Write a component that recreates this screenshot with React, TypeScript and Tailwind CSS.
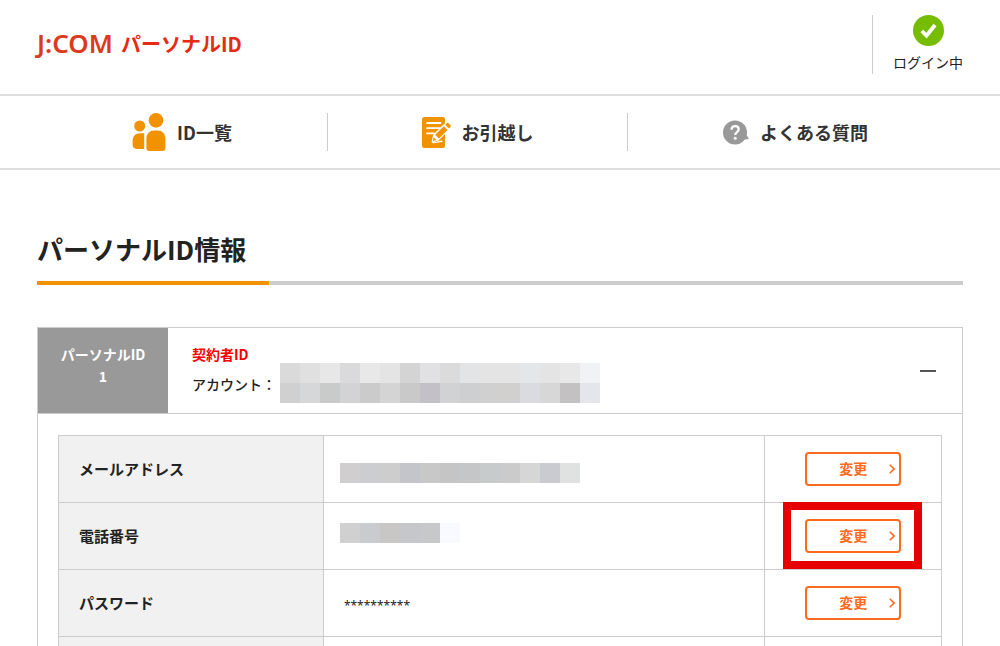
import type { ReactNode } from 'react';

const accountMask = [
  ['bg-[#dadada]', 'bg-[#e0e0e0]', 'bg-[#e6e7e6]', 'bg-[#dadadd]', 'bg-[#e8e8e8]', 'bg-[#e4e4e4]', 'bg-[#d4d4d4]', 'bg-[#e1e1e4]', 'bg-[#dadbda]', 'bg-[#e2e4e6]', 'bg-[#e4e4e4]', 'bg-[#e3e4e3]', 'bg-[#e4e7e9]', 'bg-[#e4e4e4]', 'bg-[#e8e8e8]', 'bg-[#f1f2f5]'],
  ['bg-[#d0d0d0]', 'bg-[#d5d7d9]', 'bg-[#c8cbc9]', 'bg-[#d3d3d6]', 'bg-[#cbcbcb]', 'bg-[#d3d4d3]', 'bg-[#c9c9c9]', 'bg-[#c3c1c7]', 'bg-[#d0d2d4]', 'bg-[#cecfd1]', 'bg-[#d0d0d0]', 'bg-[#d1d0cf]', 'bg-[#d9dbe0]', 'bg-[#d7d7d7]', 'bg-[#c3c1c1]', 'bg-[#e4e6eb]'],
];

const mailMask = [
  ['bg-[#d0cecf]', 'bg-[#cccdd0]', 'bg-[#cdcdcd]', 'bg-[#c3c5ca]', 'bg-[#c8c8c8]', 'bg-[#c5c5c5]', 'bg-[#c4c6c8]', 'bg-[#c7cbcb]', 'bg-[#cbcbcb]', 'bg-[#d6d6d6]', 'bg-[#cacbd0]', 'bg-[#e0e1e1]'],
];

const phoneMask = [
  ['bg-[#d0d0d0]', 'bg-[#cacbce]', 'bg-[#c8c7c5]', 'bg-[#c5c7cb]', 'bg-[#c7c8ca]', 'bg-[#f8faff]'],
];

function Mask({ rows }: { rows: string[][] }) {
  return (
    <div aria-hidden="true">
      {rows.map((row, i) => (
        <div key={i} className="flex">
          {row.map((color, j) => (
            <span key={j} className={`block size-5 ${color}`} />
          ))}
        </div>
      ))}
    </div>
  );
}

function PeopleIcon() {
  return (
    <svg width="34" height="38" viewBox="0 0 34 38" fill="#f19200" aria-hidden="true">
      <circle cx="24" cy="7.4" r="7.3" />
      <circle cx="7.7" cy="13" r="5.5" />
      <path d="M14.4 26c0-5.600 3.200-8.600 8-8.600h3c4.800 0 8 3 8 8.600v9q0 3-3 3h-13q-3 0-3-3z" />
      <path d="M.6 28C.6 23.200 3.400 20.200 8 20.200h4.200V36H5Q.6 35.500.6 31.500z" />
    </svg>
  );
}

function MemoIcon() {
  return (
    <svg width="29" height="31" viewBox="0 0 29 31" aria-hidden="true">
      <rect width="23" height="31" rx="2.5" fill="#f19200" />
      <path d="M5 6h13.5M5 11.200h13M5 16.400h7" stroke="#fff" strokeWidth="1.8" strokeLinecap="round" />
      <path d="M9.500 25.500l1.500-7.500L22.500 6.500l5.500 5.500-11.500 11.500z" fill="#fff" />
      <path d="M13.200 17.800l8.600-8.600 3.800 3.800-8.700 8.600z" fill="#f19200" />
      <path d="M23.300 7.700l1.600-1.600q.8-.7 1.600.1l2 2q.8.8 0 1.600l-1.500 1.600z" fill="#f19200" />
      <path d="M11.500 20.300l2.900 2.800-3.400.9z" fill="#f19200" />
      <path d="M11 25.500c3.500.3 5.500-1 9-1.300" fill="none" stroke="#fff" strokeWidth="1.5" strokeLinecap="round" />
    </svg>
  );
}

function QuestionIcon() {
  return (
    <svg width="26" height="25" viewBox="0 0 26 25" aria-hidden="true">
      <circle cx="12" cy="12.5" r="12" fill="#999" />
      <path d="M23 14l2.900 5-5.900.7z" fill="#999" />
      <path d="M8.500 9.700c.1-2.300 1.500-3.500 3.600-3.500s3.600 1.200 3.600 3.100c0 2.900-3.500 2.900-3.500 5.700" fill="none" stroke="#fff" strokeWidth="2.2" />
      <circle cx="12.2" cy="18.2" r="1.5" fill="#fff" />
    </svg>
  );
}

function NavItem({ icon, label, last }: { icon: ReactNode; label: string; last?: boolean }) {
  return (
    <a
      href="#"
      className={`flex h-[38px] items-center justify-center gap-[11px] text-lg font-bold text-[#333] ${last ? '' : 'border-r border-[#ccc]'}`}
    >
      {icon}
      <span>{label}</span>
    </a>
  );
}

function ChangeButton({ label, highlighted }: { label: string; highlighted?: boolean }) {
  return (
    <div className="relative mx-auto h-[34px] w-24">
      <button
        type="button"
        aria-label={`${label}を変更`}
        className="relative flex size-full items-center justify-center rounded-[4px] border-2 border-[#ff6a1c] bg-white pb-0.5 text-sm font-bold text-[#ff6a1c]"
      >
        変更
        <svg className="absolute top-2.5 right-1" width="6" height="10" viewBox="0 0 6 10" fill="none" stroke="#ff6a1c" strokeWidth="1.6" aria-hidden="true">
          <path d="M.8.8L5 5 .8 9.200" />
        </svg>
      </button>
      {highlighted && (
        <div className="pointer-events-none absolute -top-[17px] -right-[21px] -bottom-4 -left-[22px] border-8 border-[#e80000]" />
      )}
    </div>
  );
}

export default function App() {
  const rows = [
    { label: 'メールアドレス', value: <div className="pt-2"><Mask rows={mailMask} /></div> },
    { label: '電話番号', value: <div className="pb-1.5"><Mask rows={phoneMask} /></div>, highlighted: true },
    {
      label: 'パスワード',
      value: <span className="pl-1 font-['Noto_Sans','Open_Sans',sans-serif] text-xs">**********</span>,
    },
  ];

  return (
    <div className="min-h-screen bg-white font-['Noto_Sans_CJK_JP','Liberation_Sans',sans-serif] text-[#222]">
      <header className="flex h-24 items-start justify-between border-b-2 border-[#ddd] px-[37px]">
        <a href="#" className="flex h-[88px] items-center gap-2 text-[#e72a14]">
          <span className="pb-0.5 font-['Noto_Sans','Open_Sans',sans-serif] text-[26px] leading-none font-semibold text-[#dc3a1c]">J:COM</span>
          <span className="text-xl font-bold">パーソナルID</span>
        </a>
        <div className="mt-[15px] flex h-[59px] flex-col items-center border-l border-[#ccc] pl-5">
          <svg width="31" height="31" viewBox="0 0 31 31" aria-hidden="true">
            <circle cx="15.5" cy="15.5" r="15.5" fill="#76bd00" />
            <path d="M8.800 16l4.700 4.600 8.500-10.600" fill="none" stroke="#fff" strokeWidth="3.8" />
          </svg>
          <span className="mt-1.5 text-sm">ログイン中</span>
        </div>
      </header>

      <nav className="border-b-2 border-[#ddd] px-[37px] py-[17px]">
        <div className="grid grid-cols-[291fr_300fr_335fr]">
          <NavItem icon={<PeopleIcon />} label="ID一覧" />
          <NavItem icon={<MemoIcon />} label="お引越し" />
          <NavItem icon={<QuestionIcon />} label="よくある質問" last />
        </div>
      </nav>

      <main className="px-[37px] pt-[59px]">
        <h1 className="text-[26px] leading-10 font-bold">パーソナルID情報</h1>
        <div className="mt-3 h-1 bg-[#ccc]">
          <div className="h-full w-1/4 bg-[#f19200]" />
        </div>

        <section className="mt-[42px] border border-[#ccc]">
          <div className="flex h-[86px] border-b border-[#ccc]">
            <div className="w-[130px] bg-[#999] pt-[15px] text-center text-sm leading-[22px] font-bold text-white">
              パーソナルID
              <br />1
            </div>
            <div className="flex-1 pt-[15px] pl-6 text-sm">
              <p className="leading-[22px] font-bold text-[#f00]">契約者ID</p>
              <div className="-mt-0.5 flex items-center gap-1">
                <span className="pt-0.5 font-medium">アカウント：</span>
                <Mask rows={accountMask} />
              </div>
            </div>
            <button type="button" aria-label="閉じる" className="w-[68px]">
              <span className="mx-auto block h-0.5 w-4 bg-[#555]" />
            </button>
          </div>

          <div className="px-5 pt-[21px] pb-5">
            <table className="w-full table-fixed border-collapse">
              <colgroup>
                <col className="w-[30%]" />
                <col className="w-[50%]" />
                <col className="w-[20%]" />
              </colgroup>
              <tbody>
                {rows.map((row) => (
                  <tr key={row.label} className="h-[67px]">
                    <th scope="row" className="border border-[#ccc] bg-[#f1f1f1] pl-5 text-left text-[15px] font-bold">
                      {row.label}
                    </th>
                    <td className="border border-[#ccc] pl-4">{row.value}</td>
                    <td className="border border-[#ccc]">
                      <ChangeButton label={row.label} highlighted={row.highlighted} />
                    </td>
                  </tr>
                ))}
                <tr className="h-[67px]">
                  <th className="border border-[#ccc] bg-[#f1f1f1]" />
                  <td className="border border-[#ccc]" />
                  <td className="border border-[#ccc]" />
                </tr>
              </tbody>
            </table>
          </div>
        </section>
      </main>
    </div>
  );
}
